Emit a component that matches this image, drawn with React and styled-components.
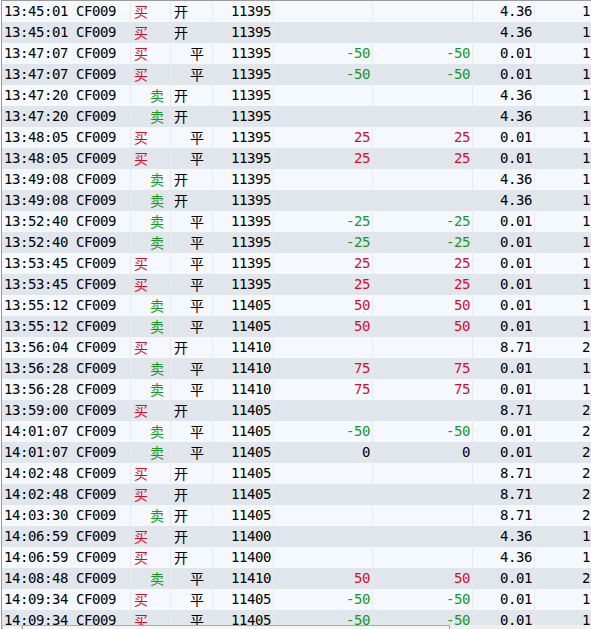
import React from 'react';
import styled, { createGlobalStyle } from 'styled-components';

const GlobalStyle = createGlobalStyle`
  html, body {
    margin: 0;
    padding: 0;
    background: #ffffff;
    overflow: hidden;
  }
`;

const RED = '#d0102a';
const GREEN = '#18981e';

const rows = [
  ['13:45:01', '买', '开', '11395', '', '', '4.36', '1'],
  ['13:45:01', '买', '开', '11395', '', '', '4.36', '1'],
  ['13:47:07', '买', '平', '11395', '-50', '-50', '0.01', '1'],
  ['13:47:07', '买', '平', '11395', '-50', '-50', '0.01', '1'],
  ['13:47:20', '卖', '开', '11395', '', '', '4.36', '1'],
  ['13:47:20', '卖', '开', '11395', '', '', '4.36', '1'],
  ['13:48:05', '买', '平', '11395', '25', '25', '0.01', '1'],
  ['13:48:05', '买', '平', '11395', '25', '25', '0.01', '1'],
  ['13:49:08', '卖', '开', '11395', '', '', '4.36', '1'],
  ['13:49:08', '卖', '开', '11395', '', '', '4.36', '1'],
  ['13:52:40', '卖', '平', '11395', '-25', '-25', '0.01', '1'],
  ['13:52:40', '卖', '平', '11395', '-25', '-25', '0.01', '1'],
  ['13:53:45', '买', '平', '11395', '25', '25', '0.01', '1'],
  ['13:53:45', '买', '平', '11395', '25', '25', '0.01', '1'],
  ['13:55:12', '卖', '平', '11405', '50', '50', '0.01', '1'],
  ['13:55:12', '卖', '平', '11405', '50', '50', '0.01', '1'],
  ['13:56:04', '买', '开', '11410', '', '', '8.71', '2'],
  ['13:56:28', '卖', '平', '11410', '75', '75', '0.01', '1'],
  ['13:56:28', '卖', '平', '11410', '75', '75', '0.01', '1'],
  ['13:59:00', '买', '开', '11405', '', '', '8.71', '2'],
  ['14:01:07', '卖', '平', '11405', '-50', '-50', '0.01', '2'],
  ['14:01:07', '卖', '平', '11405', '0', '0', '0.01', '2'],
  ['14:02:48', '买', '开', '11405', '', '', '8.71', '2'],
  ['14:02:48', '买', '开', '11405', '', '', '8.71', '2'],
  ['14:03:30', '卖', '开', '11405', '', '', '8.71', '2'],
  ['14:06:59', '买', '开', '11400', '', '', '4.36', '1'],
  ['14:06:59', '买', '开', '11400', '', '', '4.36', '1'],
  ['14:08:48', '卖', '平', '11410', '50', '50', '0.01', '2'],
  ['14:09:34', '买', '平', '11405', '-50', '-50', '0.01', '1'],
  ['14:09:34', '买', '平', '11405', '-50', '-50', '0.01', '1'],
];

const Frame = styled.div`
  margin-left: 1px;
  border-left: 1px solid #9c9c9c;
  border-top: 1px solid #9c9c9c;
  width: 640px;
  display: flex;
  flex-direction: column;
`;

const Body = styled.div`
  height: 624px;
  overflow: hidden;
`;

const Row = styled.div`
  display: grid;
  grid-template-columns: 129px 40px 42px 61px 99px 100px 62px 60px;
  height: 21px;
  background: ${p => (p.$odd ? '#e1e5ec' : '#f5f8fc')};
  font-family: "DejaVu Sans Mono", "Liberation Mono", "Noto Sans CJK SC", monospace;
  font-size: 14px;
  letter-spacing: -0.43px;
  color: #000;
`;

const Cell = styled.div`
  display: flex;
  align-items: center;
  justify-content: ${p => (p.$right ? 'flex-end' : 'flex-start')};
  padding: ${p => (p.$right ? '0 2px 2px 0' : `0 0 2px ${p.$indent || 2}px`)};
  border-right: 1px solid #e6e9ee;
  white-space: nowrap;
  overflow: hidden;
  color: ${p => p.$color || '#000'};
`;

const Han = styled.span`
  font-family: "Noto Sans CJK SC", sans-serif;
  font-size: 14px;
  letter-spacing: 0;
  color: ${p => p.$color || '#000'};
`;

const ScrollBar = styled.div`
  height: 17px;
  display: flex;
  background: #f0f0f0;
`;

const ScrollButton = styled.div`
  width: 18px;
  border: 1px solid #d0d0d0;
  background: #f4f4f4;
`;

const ScrollThumb = styled.div`
  width: 426px;
  border: 1px solid #a8a8a8;
  background: #f6f6f6;
`;

const numColor = v => {
  const n = Number(v);
  if (v === '' || n === 0) return '#000';
  return n > 0 ? RED : GREEN;
};

const App = () => (
  <>
    <GlobalStyle />
    <Frame>
      <Body>
        {rows.map((r, i) => {
          const [time, side, off, price, q1, q2, p2, n] = r;
          const buy = side === '买';
          return (
            <Row key={i} $odd={i % 2 === 1}>
              <Cell $indent={2}>{time} CF009</Cell>
              <Cell $indent={buy ? 3 : 19}>
                <Han $color={buy ? RED : GREEN}>{side}</Han>
              </Cell>
              <Cell $indent={off === '开' ? 3 : 19}>
                <Han>{off}</Han>
              </Cell>
              <Cell $right>{price}</Cell>
              <Cell $right $color={numColor(q1)}>{q1}</Cell>
              <Cell $right $color={numColor(q2)}>{q2}</Cell>
              <Cell $right>{p2}</Cell>
              <Cell $indent={47}>{n}</Cell>
            </Row>
          );
        })}
      </Body>
      <ScrollBar>
        <ScrollButton />
        <ScrollThumb />
      </ScrollBar>
    </Frame>
  </>
);

export default App;
